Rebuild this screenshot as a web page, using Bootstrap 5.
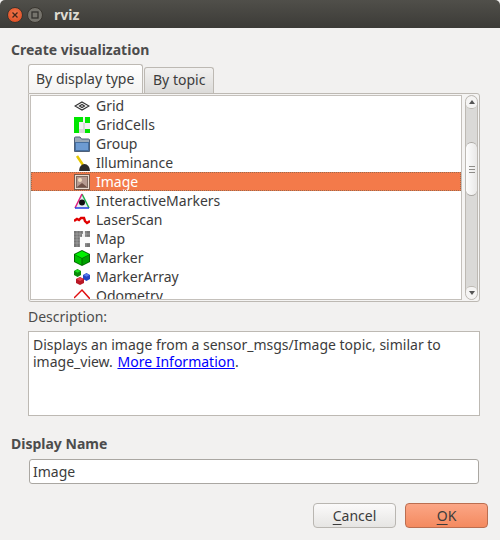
<!DOCTYPE html>
<html lang="en"><head><meta charset="utf-8"><title>rviz</title>
<link href="https://cdn.jsdelivr.net/npm/bootstrap@5.3.0/dist/css/bootstrap.min.css" rel="stylesheet">
<style>
html,body{height:540px;overflow:hidden;background:#f2f1f0}
body{font-family:"Noto Sans","Open Sans",sans-serif;font-size:14px;color:#3c3c3c;line-height:19px}
.titlebar{height:28px;background:linear-gradient(#504f4a,#3c3b37);color:#dfdbd2;font-weight:700;font-size:14px;padding-left:54px;border-radius:5px 5px 0 0}
.winbtn{width:16px;height:16px;border-radius:50%;flex:none}
.win-close{background:radial-gradient(circle at 50% 40%,#f37a4e,#d9441b);border:1px solid #38352f;left:7px;top:7px}
.win-max{background:#75736c;border:1px solid #38352f;left:27px;top:7px}
.win-wrap{position:relative}
.win-wrap .winbtn{position:absolute}
.win-close svg,.win-max svg{display:block;margin:3px}
.heading{font-weight:700;color:#4c4c4c;padding:12px 0 0 11px;height:36px}
.tabbox{margin:0 20px 0 28px}
.tabbox .nav-tabs{border:0;height:29px;align-items:flex-end;margin-bottom:0;gap:1px}
.tabbox .nav-link{font-size:14px;color:#3c3c3c;padding:0 8px;border:1px solid #bdb9b3;border-bottom:0;border-radius:3px 3px 0 0;background:linear-gradient(#f2f1f0,#dcdbd9);height:26px;line-height:24px;margin:0}
.tabbox .nav-link.active{background:linear-gradient(#fff,#f4f3f2);height:29px;line-height:28px;color:#3c3c3c;padding:0 7px;border-color:#bdb9b3;width:115px;position:relative;z-index:1}
.pane{height:209px;border:1px solid #bdb9b3;border-radius:0 3px 3px 3px;background:#f5f4f3;padding:1px;gap:3px}
.treebox{flex:1;min-width:0;background:#fff;border:1px solid #c4c0bb;overflow:hidden;height:205px}
.treebox .list-group-item{height:19px;line-height:19px;border:0;padding:0 0 0 43px;background:transparent;color:#3c3c3c;font-size:14px;border-radius:0;gap:6px;white-space:nowrap;flex:none}
.treebox .list-group-item.active{background:#f37a4a;color:#fff;outline:1px dotted #9a6a4e;outline-offset:-1px;margin:0}
.ico{width:16px;height:16px;flex:none;display:block}
.sbar{width:13px;flex:none;border:1px solid #bdb9b3;border-radius:7px;background:#dad9d7;height:205px;overflow:hidden}
.sb-cap{height:13px;background:#f5f4f3;flex:none;align-items:center;justify-content:center}
.sb-cap.up{border-bottom:1px solid #bdb9b3;border-radius:7px 7px 6px 6px}
.sb-cap.down{border-top:1px solid #bdb9b3;border-radius:6px 6px 7px 7px}
.sb-gap{height:33px;flex:none;background:#dad9d7}
.sb-thumb{height:54px;flex:none;border:1px solid #a9a6a1;border-width:1px 0;border-radius:7px;background:linear-gradient(90deg,#fdfdfd,#e9e8e7);gap:2px}
.sb-thumb span{display:block;width:6px;height:1px;background:#8e8c88}
.sb-rest{flex:1;background:#dad9d7}
.desc-label{margin:4px 0 0 28px;height:25px;line-height:22px;color:#4c4c4c}
.descbox{margin:0 20px 0 28px;height:85px;background:#fff;border:1px solid #bdb9b3;padding:4px;line-height:17px;color:#3c3c3c}
.descbox a{color:#00f;text-decoration:underline;margin-left:1px}
.heading2{font-weight:700;color:#4c4c4c;margin:18px 0 0 11px;height:25px;line-height:19px}
.nameinput.form-control{margin:0 20px 0 29px;width:450px;height:25px;padding:0 3px;font-size:14px;font-family:inherit;color:#3c3c3c;border:1px solid #aaa7a2;border-radius:3px;background:#fff;box-shadow:none;line-height:23px}
.foot{padding:19px 12px 0 0;gap:9px}
.foot .btn{height:25px;padding:0;font-size:14px;line-height:23px;border-radius:4px;color:#3c3c3c}
.btn-cancel.btn{width:83px;background:linear-gradient(#fbfafa,#e6e5e3);border:1px solid #b9b6b1}
.btn-ok.btn{width:83px;background:linear-gradient(#fba686,#f48a5f);border:1px solid #bb6e50}
.foot u{text-underline-offset:3px}
</style></head><body>
<div class="d-flex flex-column">
<div class="titlebar win-wrap d-flex align-items-center">
 <span class="winbtn win-close"><svg width="8" height="8" viewBox="0 0 8 8"><path d="M1.500 1.500l5 5M6.500 1.500l-5 5" stroke="#43261a" stroke-width="1.300"/></svg></span>
 <span class="winbtn win-max"><svg width="8" height="8" viewBox="0 0 8 8"><rect x="1" y="1" width="6" height="6" fill="none" stroke="#33322e" stroke-width="1.300"/></svg></span>
 <span>rviz</span>
</div>
<div class="heading">Create visualization</div>
<div class="tabbox">
 <ul class="nav nav-tabs">
  <li class="nav-item"><a class="nav-link active" href="#">By display type</a></li>
  <li class="nav-item"><a class="nav-link" href="#">By topic</a></li>
 </ul>
 <div class="pane d-flex">
  <div class="treebox">
   <div class="list-group d-flex flex-column">
    <div class="list-group-item d-flex align-items-center"><svg class="ico" viewBox="0 0 16 16"><path d="M8 4L15 8L8 12L1 8ZM8 6.500L5.500 8L8 9.500L10.500 8Z" fill="none" stroke="#333" stroke-width="1.200"/></svg>Grid</div>
    <div class="list-group-item d-flex align-items-center"><svg class="ico" viewBox="0 0 16 16"><rect width="16" height="16" fill="#f1f1f1"/><path d="M9 6h2v6h-2zM5 12h6v4h-6z" fill="#d8d8d8"/><path d="M0 0h9v5h-4v11h-5zM11 0h5v6h-5zM11 12h5v4h-5z" fill="#00e600"/></svg>GridCells</div>
    <div class="list-group-item d-flex align-items-center"><svg class="ico" viewBox="0 0 16 16"><path d="M.5 15.500V2Q.5 1 1.500 1H6L7.500 3H14.500Q15.500 3 15.500 4V15.500Z" fill="#9aa8b8" stroke="#4e6078"/><rect x="1.500" y="6.500" width="13" height="8" fill="#6d9bd2" stroke="#466f9f"/></svg>Group</div>
    <div class="list-group-item d-flex align-items-center"><svg class="ico" viewBox="0 0 16 16"><path d="M3 1L9 10" stroke="#e6c800" stroke-width="2.500"/><path d="M5 16A5.500 7 0 0 1 16 16Z" fill="#2a2a2a"/></svg>Illuminance</div>
    <div class="list-group-item active d-flex align-items-center"><svg class="ico" viewBox="0 0 16 16"><rect x=".5" y=".5" width="15" height="15" fill="#eadbd0" stroke="#7a5a4a"/><rect x="2.500" y="2.500" width="11" height="11" fill="#b59a90" stroke="#7f6a60"/><circle cx="6" cy="6" r="2" fill="#f0dcc0"/><path d="M3 13L8 9L13 13Z" fill="#6e5046"/></svg>Image</div>
    <div class="list-group-item d-flex align-items-center"><svg class="ico" viewBox="0 0 16 16"><path d="M8 1L15 15H1Z" fill="#e6eef0"/><path d="M8 1L15 15" stroke="#22b14c" stroke-width="1.500"/><path d="M8 1L1 15" stroke="#e02080" stroke-width="1.500"/><path d="M1 15H15" stroke="#2040e0" stroke-width="1.500"/><circle cx="8" cy="9.500" r="3" fill="#111"/></svg>InteractiveMarkers</div>
    <div class="list-group-item d-flex align-items-center"><svg class="ico" viewBox="0 0 16 16"><path d="M0 9L3 7L5 8L7 6L10 6L11 9L13 11L16 9" fill="none" stroke="#e00000" stroke-width="2.400"/></svg>LaserScan</div>
    <div class="list-group-item d-flex align-items-center"><svg class="ico" viewBox="0 0 16 16"><rect width="16" height="16" fill="#eee"/><path d="M0 0h6v16h-6zM6 0h3v3h-3zM11 0h5v6h-5zM6 3h2v3h-2zM11 12h5v4h-5z" fill="#757575"/><path d="M6 6h5v10h-5zM11 6h5v6h-5z" fill="#fbfbfb"/><path d="M3 0V16M6 0V16M9 0V16M12 0V16M0 3H16M0 6H16M0 9H16M0 12H16" stroke="#fff" stroke-opacity=".22"/></svg>Map</div>
    <div class="list-group-item d-flex align-items-center"><svg class="ico" viewBox="0 0 16 16"><path d="M8 0L16 4V12L8 16L0 12V4Z" fill="#006400"/><path d="M8 1L15 4.500L8 8L1 4.500Z" fill="#00f000"/><path d="M1 5L7.500 8.500V15L1 11.500Z" fill="#00c000"/><path d="M15 5L8.500 8.500V15L15 11.500Z" fill="#00a000"/></svg>Marker</div>
    <div class="list-group-item d-flex align-items-center"><svg class="ico" viewBox="0 0 16 16"><path d="M3.500 0L7 2V6L3.500 8L0 6V2Z" fill="#0a8a0a"/><path d="M3.500 .5L6.500 2L3.500 3.700L.5 2Z" fill="#20e020"/><path d="M12.500 4L16 6V10L12.500 12L9 10V6Z" fill="#2444c4"/><path d="M12.500 4.500L15.500 6L12.500 7.700L9.500 6Z" fill="#5a7cf0"/><path d="M6 8L10 10V14L6 16L2 14V10Z" fill="#b81826"/><path d="M6 8.500L9.500 10L6 12L2.500 10Z" fill="#ee4050"/></svg>MarkerArray</div>
    <div class="list-group-item d-flex align-items-center"><svg class="ico" viewBox="0 0 16 16"><path d="M0 10L8 2L16 11" fill="none" stroke="#e01010" stroke-width="1.500"/></svg>Odometry</div>
   </div>
  </div>
  <div class="sbar d-flex flex-column">
   <div class="sb-cap up d-flex"><svg width="6" height="4" viewBox="0 0 6 4"><path d="M3 0L6 4H0Z" fill="#555"/></svg></div>
   <div class="sb-gap"></div>
   <div class="sb-thumb d-flex flex-column align-items-center justify-content-center"><span></span><span></span><span></span></div>
   <div class="sb-rest"></div>
   <div class="sb-cap down d-flex"><svg width="6" height="4" viewBox="0 0 6 4"><path d="M3 4L6 0H0Z" fill="#555"/></svg></div>
  </div>
 </div>
</div>
<div class="desc-label">Description:</div>
<div class="descbox">Displays an image from a sensor_msgs/Image topic, similar to image_view. <a href="#">More Information</a>.</div>
<div class="heading2">Display Name</div>
<input class="form-control nameinput" type="text" value="Image">
<div class="foot d-flex justify-content-end">
 <button class="btn btn-cancel" type="button"><u>C</u>ancel</button>
 <button class="btn btn-ok" type="button"><u>O</u>K</button>
</div>
</div>
</body></html>
